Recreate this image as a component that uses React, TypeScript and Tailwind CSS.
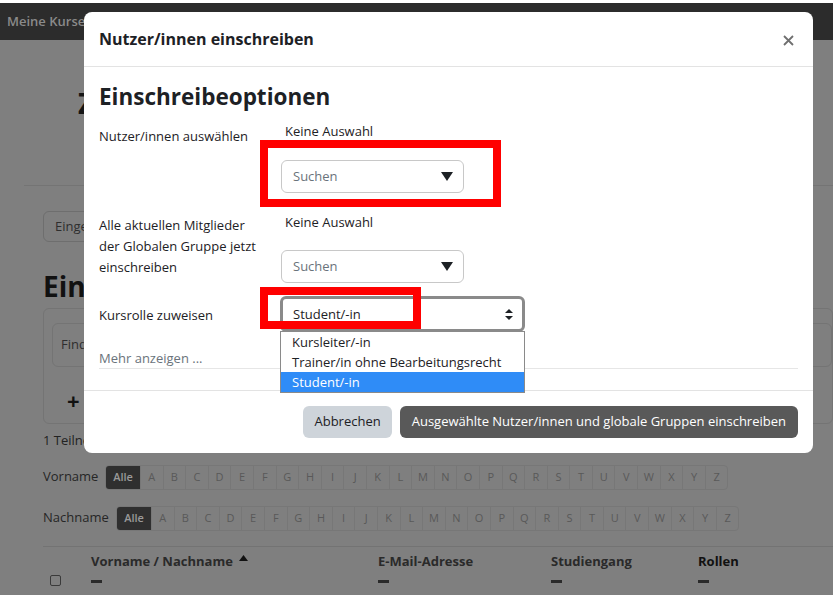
import React from 'react';

const letters = 'ABCDEFGHIJKLMNOPQRSTUVWXYZ'.split('');

const LetterBar = ({ label, labelClass }: { label: string; labelClass: string }) => (
  <div className="flex items-center">
    <span className={`text-[13px] text-[#262626] ${labelClass}`}>{label}</span>
    <div className="flex h-[25px] rounded-[4px] border border-[#777]">
      <span className="flex w-[34px] items-center justify-center rounded-l-[3px] bg-[#2f2f2f] text-[11px] font-semibold text-[#9a9a9a]">Alle</span>
      {letters.map(l => (
        <span key={l} className="flex w-[22.6px] items-center justify-center border-l border-[#777] text-[11px] text-[#595959]">{l}</span>
      ))}
    </div>
  </div>
);

const SearchSelect = () => (
  <div className="flex h-[33px] w-[183px] items-center justify-between rounded-[6px] border border-[#c8c8c8] pl-[11px] pr-[10px]">
    <span className="text-[13px] text-[#6a737b]">Suchen</span>
    <svg width="12" height="9" viewBox="0 0 12 9">
      <path d="M0 0H12L6 9Z" fill="#1d2125" />
    </svg>
  </div>
);

export default function App() {
  return (
    <div className="relative h-[595px] w-[833px] overflow-hidden bg-[#7f7f7f] font-['Open_Sans',sans-serif]">
      {/* page behind the backdrop */}
      <div className="h-[3px] bg-white" />
      <div className="flex h-[37px] items-center bg-[#2c2c2c] pl-[7px]">
        <span className="text-[13px] font-semibold text-[#8a8a8a]">Meine Kurse</span>
      </div>
      <div className="h-[145px] pl-[78px] pt-[46px]">
        <span className="text-[28px] font-bold leading-[34px] text-[#151515]">Zugriff</span>
      </div>
      <div className="ml-[24px] border-t border-[#747474]" />
      <div className="pl-[43px]">
        <div className="mt-[25px] flex h-[31px] w-[200px] items-center rounded-[6px] border border-[#6e6e6e] pl-[11px] text-[13px] text-[#2e2e2e]">
          Eingeschriebene Nutzer/innen
        </div>
        <div className="mt-[27px] text-[28px] font-bold leading-[34px] text-[#111]">Eingeschriebene Nutzer/innen</div>
        <div className="mt-[5px] h-[116px] rounded-[6px] border border-[#747474] pl-[8px] pt-[14px]">
          <div className="flex h-[44px] items-center rounded-[6px] border border-[#747474] pl-[8px] text-[13px] text-[#2e2e2e]">Finden</div>
          <div className="mt-[22px] pl-[15px] text-[22px] font-bold leading-[22px] text-[#111]">+</div>
        </div>
        <div className="mt-[7px] text-[13px] text-[#222]">1 Teilnehmer/innen gefunden</div>
        <div className="mt-[14px]">
          <LetterBar label="Vorname" labelClass="w-[62px]" />
        </div>
        <div className="mt-[16px]">
          <LetterBar label="Nachname" labelClass="w-[73px]" />
        </div>
        <div className="mt-[15px] border-t border-[#737373]" />
        <div className="flex pt-[5px]">
          <div className="w-[48px] pl-[7px] pt-[23px]">
            <div className="h-[11px] w-[11px] rounded-[2px] border border-[#3a3a3a]" />
          </div>
          <div className="w-[287px]">
            <div className="flex items-center gap-[6px] text-[13px] font-bold text-[#2a2a2a]">
              Vorname / Nachname
              <svg width="9" height="6" viewBox="0 0 9 6" className="mb-[6px]">
                <path d="M4.5 0L9 6H0Z" fill="#111" />
              </svg>
            </div>
            <div className="mt-[9px] h-[3px] w-[11px] bg-[#2a2a2a]" />
          </div>
          <div className="w-[173px]">
            <div className="text-[13px] font-bold text-[#2a2a2a]">E-Mail-Adresse</div>
            <div className="mt-[9px] h-[3px] w-[11px] bg-[#2a2a2a]" />
          </div>
          <div className="w-[147px]">
            <div className="text-[13px] font-bold text-[#2a2a2a]">Studiengang</div>
            <div className="mt-[9px] h-[3px] w-[11px] bg-[#2a2a2a]" />
          </div>
          <div>
            <div className="text-[13px] font-bold text-[#111]">Rollen</div>
            <div className="mt-[9px] h-[3px] w-[11px] bg-[#2a2a2a]" />
          </div>
        </div>
      </div>

      {/* modal */}
      <div className="absolute left-[84px] top-[12px] flex w-[729px] flex-col rounded-[8px] bg-white">
        <div className="flex h-[55px] items-center justify-between border-b border-[#e3e3e3] pl-[15px] pr-[19px]">
          <span className="text-[16px] font-bold text-[#1d2125]">Nutzer/innen einschreiben</span>
          <svg width="11" height="11" viewBox="0 0 11 11" className="mt-[2px]">
            <path d="M1 1L10 10M10 1L1 10" stroke="#6f6f6f" strokeWidth="1.8" />
          </svg>
        </div>
        <div className="relative px-[15px] pb-[21px]">
          <h2 className="mt-[17px] text-[22.5px] font-bold leading-[26px] text-[#1d2125]">Einschreibeoptionen</h2>

          <div className="mt-[11px] flex">
            <div className="w-[182px] pt-[5px] text-[13px] leading-[20px] text-[#1d2125]">Nutzer/innen auswählen</div>
            <div>
              <div className="pl-[4px] text-[13px] leading-[20px] text-[#1d2125]">Keine Auswahl</div>
              <div className="mt-[19px]"><SearchSelect /></div>
            </div>
          </div>

          <div className="mt-[19px] flex">
            <div className="w-[182px] pt-[3px] text-[13px] leading-[21px] text-[#1d2125]">
              Alle aktuellen Mitglieder<br />der Globalen Gruppe jetzt<br />einschreiben
            </div>
            <div>
              <div className="pl-[4px] text-[13px] leading-[20px] text-[#1d2125]">Keine Auswahl</div>
              <div className="mt-[18px]"><SearchSelect /></div>
            </div>
          </div>

          <div className="mt-[13px] flex items-center">
            <div className="w-[181px] pt-[2px] text-[13px] leading-[20px] text-[#1d2125]">Kursrolle zuweisen</div>
            <div className="relative">
              <div className="flex h-[36px] w-[245px] items-center justify-between rounded-[6px] border-[3px] border-[#8a8a8a] pl-[10px] pr-[9px]">
                <span className="pt-[2px] text-[13px] text-[#1d2125]">Student/-in</span>
                <svg width="8" height="11" viewBox="0 0 8 11">
                  <path d="M4 0L8 4H0Z M4 11L0 7H8Z" fill="#1d2125" />
                </svg>
              </div>
              <div className="absolute left-0 top-[35px] z-10 w-[245px] border border-[#8a8a8a] bg-white text-[13px] leading-[20px] text-[#1d2125]">
                <div className="pl-[11px]">Kursleiter/-in</div>
                <div className="pl-[11px]">Trainer/in ohne Bearbeitungsrecht</div>
                <div className="bg-[#2f8cf7] pl-[11px] text-white">Student/-in</div>
              </div>
            </div>
          </div>

          <div className="mt-[16px] border-b border-[#e6e6e6] text-[13px] leading-[20px] text-[#6a737b]">Mehr anzeigen ...</div>
        </div>
        <div className="flex justify-end gap-[8px] border-t border-[#e3e3e3] pb-[15px] pr-[15px] pt-[15px]">
          <button className="h-[32px] rounded-[6px] bg-[#ced4da] px-[11px] text-[13px] text-[#1d2125]">Abbrechen</button>
          <button className="h-[32px] rounded-[6px] bg-[#595959] px-[12px] text-[13px] text-white">Ausgewählte Nutzer/innen und globale Gruppen einschreiben</button>
        </div>
      </div>

      {/* red annotation frames */}
      <div className="absolute left-[260px] top-[140px] h-[67px] w-[241px] border-[8px] border-[#ff0000]" />
      <div className="absolute left-[260px] top-[287px] h-[42px] w-[161px] border-[8px] border-[#ff0000]" />
    </div>
  );
}
